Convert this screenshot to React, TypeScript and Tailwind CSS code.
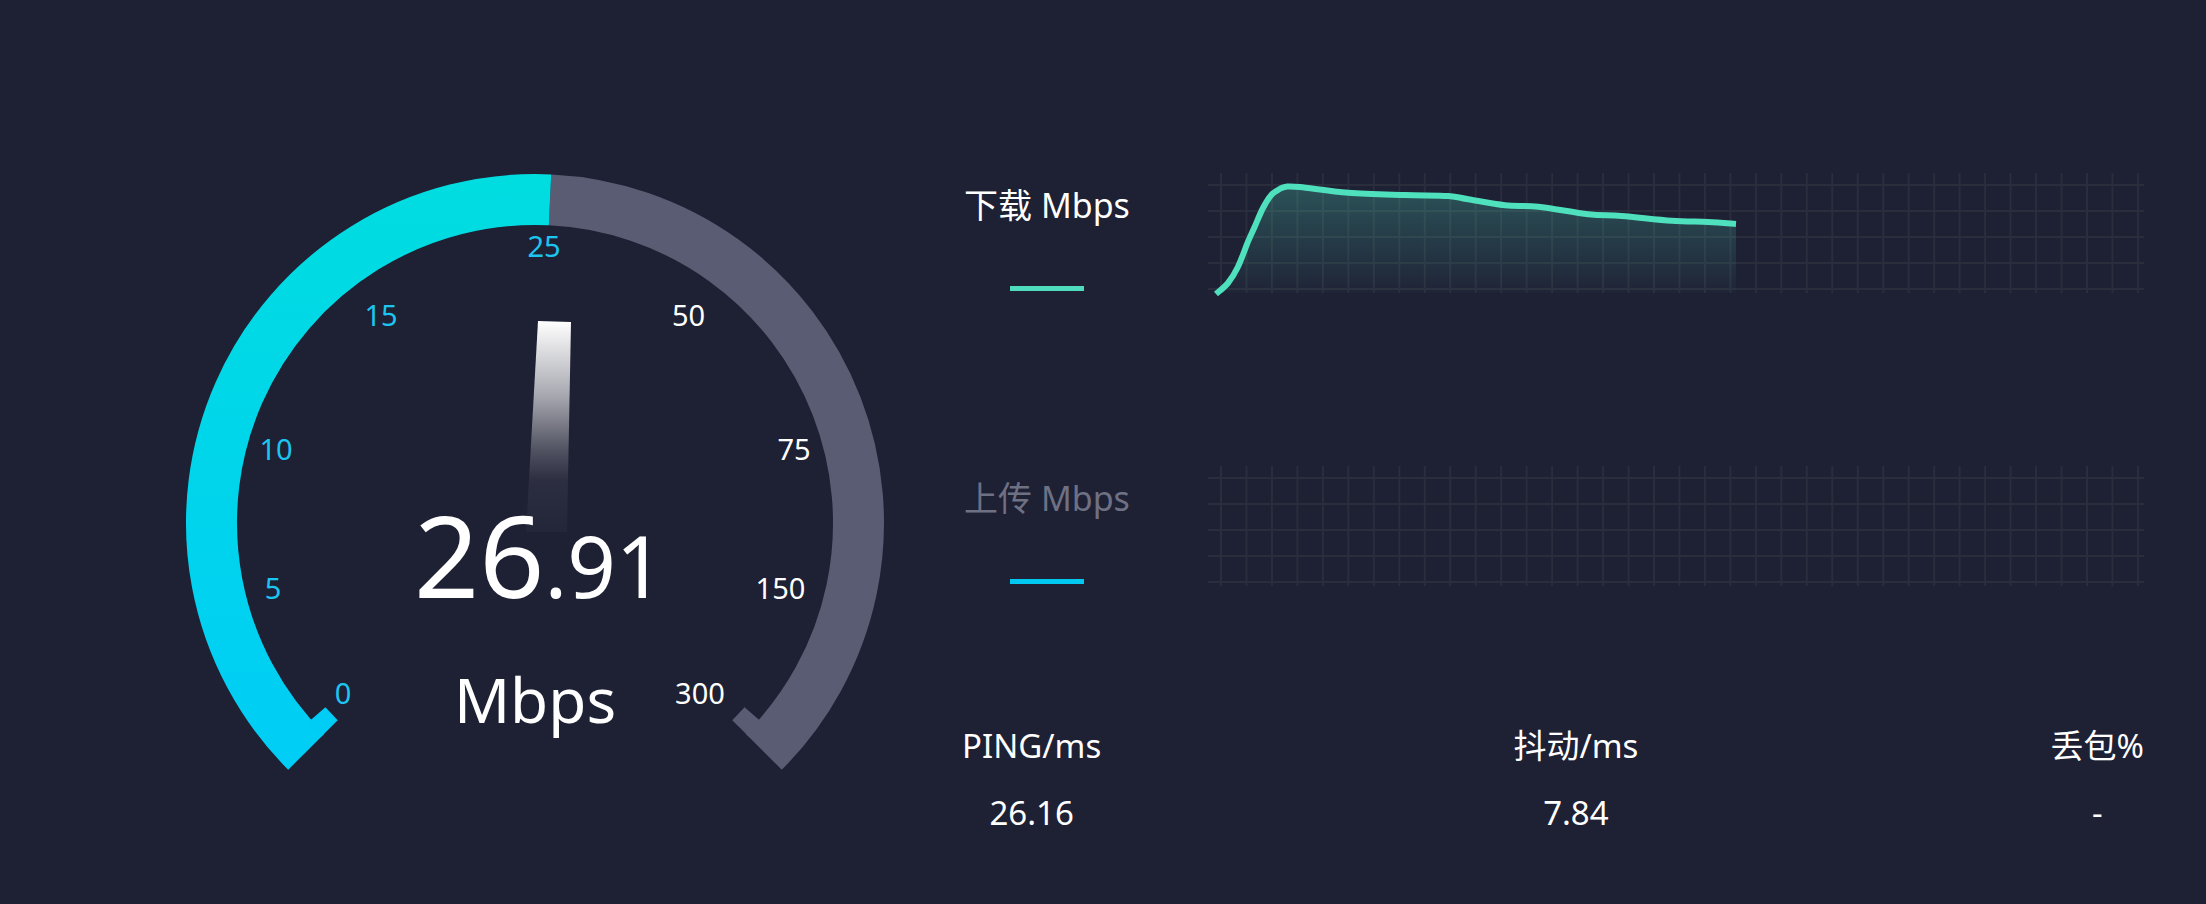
import React from "react";

const CX = 535;
const CY = 523;

function pt(r: number, deg: number): [number, number] {
  const a = (deg * Math.PI) / 180;
  return [CX + r * Math.cos(a), CY - r * Math.sin(a)];
}

function arcPath(r: number, a0: number, a1: number) {
  const [x0, y0] = pt(r, a0);
  const [x1, y1] = pt(r, a1);
  const large = Math.abs(a0 - a1) > 180 ? 1 : 0;
  return `M${x0.toFixed(2)} ${y0.toFixed(2)} A${r} ${r} 0 ${large} 1 ${x1.toFixed(2)} ${y1.toFixed(2)}`;
}

function tab(a0: number, a1: number) {
  const pts = [pt(279, a0), pt(302, a0), pt(302, a1), pt(279, a1)];
  return pts.map((p) => `${p[0].toFixed(2)},${p[1].toFixed(2)}`).join(" ");
}

function smooth(pts: number[][]) {
  let d = `M${pts[0][0]} ${pts[0][1]}`;
  for (let i = 0; i < pts.length - 1; i++) {
    const p0 = pts[i - 1] || pts[i];
    const p1 = pts[i];
    const p2 = pts[i + 1];
    const p3 = pts[i + 2] || p2;
    const c1x = p1[0] + (p2[0] - p0[0]) / 6;
    const c1y = p1[1] + (p2[1] - p0[1]) / 6;
    const c2x = p2[0] - (p3[0] - p1[0]) / 6;
    const c2y = p2[1] - (p3[1] - p1[1]) / 6;
    d += ` C${c1x.toFixed(2)} ${c1y.toFixed(2)} ${c2x.toFixed(2)} ${c2y.toFixed(2)} ${p2[0]} ${p2[1]}`;
  }
  return d;
}

const LINE_PTS = [
  [8, 121],
  [20, 110],
  [30, 93.7],
  [40, 68.7],
  [46.7, 53.7],
  [55, 35],
  [63.3, 22],
  [71.7, 16],
  [78, 13.7],
  [92, 14],
  [140.3, 19.7],
  [197, 22],
  [240.3, 23],
  [260.3, 26.3],
  [297, 32.3],
  [330.3, 33.7],
  [380.3, 41.3],
  [413.7, 43],
  [463.7, 47.7],
  [500, 49],
  [528, 51],
];

const CHART_W = 936;
const CHART_H = 120;

function Grid() {
  const vs: number[] = [];
  for (let k = 0; k <= 36; k++) vs.push(13 + 25.47 * k);
  const hs = [12, 38, 64, 90, 116];
  return (
    <g stroke="#2a2d3c" strokeWidth={2}>
      {vs.map((x, i) => (
        <line key={"v" + i} x1={x} y1={0} x2={x} y2={CHART_H} />
      ))}
      {hs.map((y, i) => (
        <line key={"h" + i} x1={0} y1={y} x2={CHART_W} y2={y} />
      ))}
    </g>
  );
}

function DownloadChart() {
  const line = smooth(LINE_PTS);
  const last = LINE_PTS[LINE_PTS.length - 1];
  const area = `${line} L${last[0]} ${CHART_H} L${LINE_PTS[0][0]} ${CHART_H} Z`;
  return (
    <svg width={CHART_W} height={CHART_H} viewBox={`0 0 ${CHART_W} ${CHART_H}`} className="block overflow-visible">
      <defs>
        <linearGradient id="areaGrad" x1="0" y1="14" x2="0" y2="120" gradientUnits="userSpaceOnUse">
          <stop offset="0" stopColor="#50e1be" stopOpacity="0.26" />
          <stop offset="1" stopColor="#50e1be" stopOpacity="0.02" />
        </linearGradient>
      </defs>
      <Grid />
      <path d={area} fill="url(#areaGrad)" />
      <path d={line} fill="none" stroke="#4fe0bd" strokeWidth={6} strokeLinejoin="round" strokeLinecap="butt" />
    </svg>
  );
}

function UploadChart() {
  return (
    <svg width={CHART_W} height={CHART_H} viewBox={`0 0 ${CHART_W} ${CHART_H}`} className="block">
      <Grid />
    </svg>
  );
}

const LABELS: { t: string; x: number; y: number; on: boolean }[] = [
  { t: "0", x: 343, y: 704, on: true },
  { t: "5", x: 273, y: 599, on: true },
  { t: "10", x: 276, y: 460, on: true },
  { t: "15", x: 381, y: 326, on: true },
  { t: "25", x: 544, y: 257, on: true },
  { t: "50", x: 688.5, y: 326, on: false },
  { t: "75", x: 794, y: 460, on: false },
  { t: "150", x: 780.5, y: 599, on: false },
  { t: "300", x: 700, y: 704, on: false },
];

function Gauge() {
  const VAL_ANGLE = 87.34;
  return (
    <svg width={962} height={904} viewBox="0 0 962 904" className="block">
      <defs>
        <linearGradient id="cyanGrad" x1="0" y1="174" x2="0" y2="772" gradientUnits="userSpaceOnUse">
          <stop offset="0" stopColor="#00dde0" />
          <stop offset="1" stopColor="#00cdf6" />
        </linearGradient>
        <linearGradient id="needleGrad" x1="0" y1="321" x2="0" y2="532" gradientUnits="userSpaceOnUse">
          <stop offset="0" stopColor="#ffffff" stopOpacity="1" />
          <stop offset="0.345" stopColor="#ffffff" stopOpacity="0.62" />
          <stop offset="0.617" stopColor="#ffffff" stopOpacity="0.22" />
          <stop offset="0.76" stopColor="#ffffff" stopOpacity="0.06" />
          <stop offset="1" stopColor="#ffffff" stopOpacity="0.025" />
        </linearGradient>
      </defs>
      <path d={arcPath(323.5, VAL_ANGLE, -45)} fill="none" stroke="#595c72" strokeWidth={51} />
      <path d={arcPath(323.5, 225, VAL_ANGLE)} fill="none" stroke="url(#cyanGrad)" strokeWidth={51} />
      <polygon points={tab(225, 221.3)} fill="#00cdf6" />
      <polygon points={tab(-45, -41.3)} fill="#595c72" />
      <polygon points="538,321 571,322 567,532 526,532" fill="url(#needleGrad)" />
      {LABELS.map((l) => (
        <text
          key={l.t}
          x={l.x}
          y={l.y}
          textAnchor="middle"
          fontSize={29}
          fill={l.on ? "#1cc5ef" : "#ffffff"}
        >
          {l.t}
        </text>
      ))}
      <text x={414} y={598} fill="#ffffff">
        <tspan fontSize={114}>26</tspan>
        <tspan fontSize={85}>.91</tspan>
      </text>
      <text x={535} y={723} textAnchor="middle" fontSize={62} fill="#ffffff">
        Mbps
      </text>
    </svg>
  );
}

function StatCol({ label, value }: { label: string; value: string }) {
  return (
    <div className="flex flex-col items-center">
      <div className="h-[40px] leading-[40px] whitespace-nowrap">{label}</div>
      <div className="mt-[27px] h-[40px] leading-[40px] whitespace-nowrap">{value}</div>
    </div>
  );
}

export default function App() {
  return (
    <div className="w-full h-[904px] bg-[#1e2034] flex overflow-hidden font-['Noto_Sans','Noto_Sans_CJK_SC',sans-serif]">
      <div className="w-[962px] shrink-0">
        <Gauge />
      </div>
      <div className="flex-1 pr-[62px] pt-[173px] flex flex-col">
        <div className="flex h-[120px]">
          <div className="w-[170px] shrink-0 flex flex-col items-center">
            <div className="mt-[12px] h-[40px] leading-[40px] text-[34px] text-white whitespace-nowrap">下载 Mbps</div>
            <div className="mt-[61px] w-[74px] h-[5px] bg-[#4fdcbd]" />
          </div>
          <div className="ml-[76px] w-[936px] shrink-0">
            <DownloadChart />
          </div>
        </div>
        <div className="flex h-[120px] mt-[173px]">
          <div className="w-[170px] shrink-0 flex flex-col items-center">
            <div className="mt-[12px] h-[40px] leading-[40px] text-[34px] text-[#6e7184] whitespace-nowrap">上传 Mbps</div>
            <div className="mt-[61px] w-[74px] h-[5px] bg-[#00c8f0]" />
          </div>
          <div className="ml-[76px] w-[936px] shrink-0">
            <UploadChart />
          </div>
        </div>
        <div className="mt-[140px] flex justify-between text-white text-[33px]">
          <StatCol label="PING/ms" value="26.16" />
          <StatCol label="抖动/ms" value="7.84" />
          <StatCol label="丢包%" value="-" />
        </div>
      </div>
    </div>
  );
}
